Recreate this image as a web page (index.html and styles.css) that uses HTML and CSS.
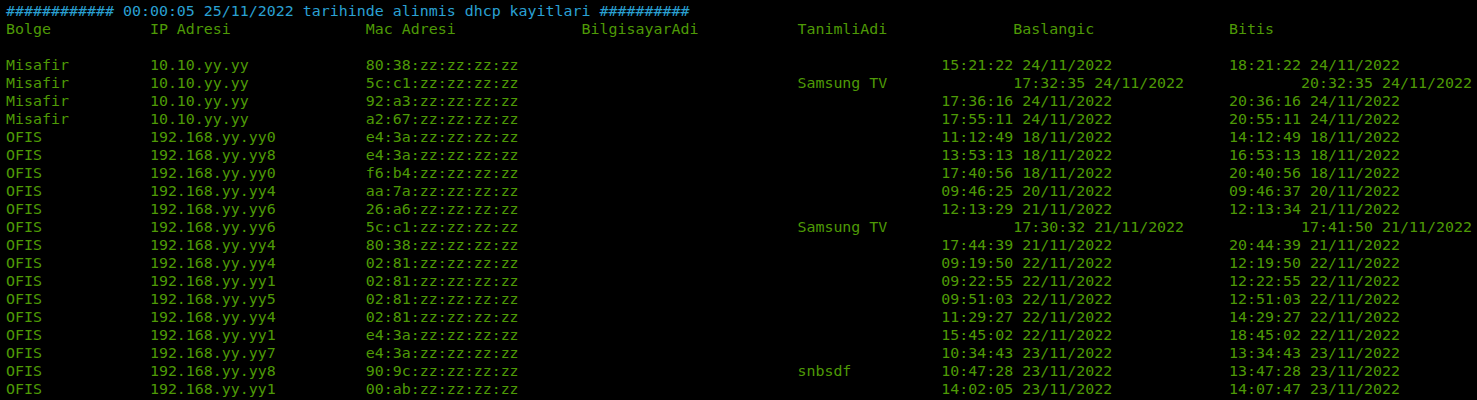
FILE: index.html
```html
<!DOCTYPE html>
<html lang="tr">
<head>
<meta charset="utf-8">
<title>dhcp kayitlari</title>
<link rel="stylesheet" href="styles.css">
</head>
<body>
<pre class="term"><span class="title">############ 00:00:05 25/11/2022 tarihinde alinmis dhcp kayitlari ##########</span>
<span class="out">Bolge&#9;&#9;IP Adresi&#9;&#9;Mac Adresi&#9;&#9;BilgisayarAdi&#9;&#9;TanimliAdi&#9;&#9;Baslangic&#9;&#9;Bitis

Misafir&#9;&#9;10.10.yy.yy&#9;&#9;80:38:zz:zz:zz:zz&#9;&#9;&#9;&#9;&#9;&#9;15:21:22 24/11/2022&#9;&#9;18:21:22 24/11/2022
Misafir&#9;&#9;10.10.yy.yy&#9;&#9;5c:c1:zz:zz:zz:zz&#9;&#9;&#9;&#9;Samsung TV&#9;&#9;17:32:35 24/11/2022&#9;&#9;20:32:35 24/11/2022
Misafir&#9;&#9;10.10.yy.yy&#9;&#9;92:a3:zz:zz:zz:zz&#9;&#9;&#9;&#9;&#9;&#9;17:36:16 24/11/2022&#9;&#9;20:36:16 24/11/2022
Misafir&#9;&#9;10.10.yy.yy&#9;&#9;a2:67:zz:zz:zz:zz&#9;&#9;&#9;&#9;&#9;&#9;17:55:11 24/11/2022&#9;&#9;20:55:11 24/11/2022
OFIS&#9;&#9;192.168.yy.yy0&#9;&#9;e4:3a:zz:zz:zz:zz&#9;&#9;&#9;&#9;&#9;&#9;11:12:49 18/11/2022&#9;&#9;14:12:49 18/11/2022
OFIS&#9;&#9;192.168.yy.yy8&#9;&#9;e4:3a:zz:zz:zz:zz&#9;&#9;&#9;&#9;&#9;&#9;13:53:13 18/11/2022&#9;&#9;16:53:13 18/11/2022
OFIS&#9;&#9;192.168.yy.yy0&#9;&#9;f6:b4:zz:zz:zz:zz&#9;&#9;&#9;&#9;&#9;&#9;17:40:56 18/11/2022&#9;&#9;20:40:56 18/11/2022
OFIS&#9;&#9;192.168.yy.yy4&#9;&#9;aa:7a:zz:zz:zz:zz&#9;&#9;&#9;&#9;&#9;&#9;09:46:25 20/11/2022&#9;&#9;09:46:37 20/11/2022
OFIS&#9;&#9;192.168.yy.yy6&#9;&#9;26:a6:zz:zz:zz:zz&#9;&#9;&#9;&#9;&#9;&#9;12:13:29 21/11/2022&#9;&#9;12:13:34 21/11/2022
OFIS&#9;&#9;192.168.yy.yy6&#9;&#9;5c:c1:zz:zz:zz:zz&#9;&#9;&#9;&#9;Samsung TV&#9;&#9;17:30:32 21/11/2022&#9;&#9;17:41:50 21/11/2022
OFIS&#9;&#9;192.168.yy.yy4&#9;&#9;80:38:zz:zz:zz:zz&#9;&#9;&#9;&#9;&#9;&#9;17:44:39 21/11/2022&#9;&#9;20:44:39 21/11/2022
OFIS&#9;&#9;192.168.yy.yy4&#9;&#9;02:81:zz:zz:zz:zz&#9;&#9;&#9;&#9;&#9;&#9;09:19:50 22/11/2022&#9;&#9;12:19:50 22/11/2022
OFIS&#9;&#9;192.168.yy.yy1&#9;&#9;02:81:zz:zz:zz:zz&#9;&#9;&#9;&#9;&#9;&#9;09:22:55 22/11/2022&#9;&#9;12:22:55 22/11/2022
OFIS&#9;&#9;192.168.yy.yy5&#9;&#9;02:81:zz:zz:zz:zz&#9;&#9;&#9;&#9;&#9;&#9;09:51:03 22/11/2022&#9;&#9;12:51:03 22/11/2022
OFIS&#9;&#9;192.168.yy.yy4&#9;&#9;02:81:zz:zz:zz:zz&#9;&#9;&#9;&#9;&#9;&#9;11:29:27 22/11/2022&#9;&#9;14:29:27 22/11/2022
OFIS&#9;&#9;192.168.yy.yy1&#9;&#9;e4:3a:zz:zz:zz:zz&#9;&#9;&#9;&#9;&#9;&#9;15:45:02 22/11/2022&#9;&#9;18:45:02 22/11/2022
OFIS&#9;&#9;192.168.yy.yy7&#9;&#9;e4:3a:zz:zz:zz:zz&#9;&#9;&#9;&#9;&#9;&#9;10:34:43 23/11/2022&#9;&#9;13:34:43 23/11/2022
OFIS&#9;&#9;192.168.yy.yy8&#9;&#9;90:9c:zz:zz:zz:zz&#9;&#9;&#9;&#9;snbsdf&#9;&#9;10:47:28 23/11/2022&#9;&#9;13:47:28 23/11/2022
OFIS&#9;&#9;192.168.yy.yy1&#9;&#9;00:ab:zz:zz:zz:zz&#9;&#9;&#9;&#9;&#9;&#9;14:02:05 23/11/2022&#9;&#9;14:07:47 23/11/2022</span></pre>
</body>
</html>
```
FILE: styles.css
```css
html, body {
  margin: 0;
  padding: 0;
  background: #000000;
  height: 100%;
  overflow: hidden;
}

.term {
  margin: 0;
  padding: 2px 0 0 6px;
  font-family: "DejaVu Sans Mono", monospace;
  font-size: 14.95px;
  line-height: 18px;
  white-space: pre;
  tab-size: 8;
  -moz-tab-size: 8;
  color: #4e9a06;
}

.title {
  color: #2aa1d3;
}

.out {
  color: #4e9a06;
}
```
